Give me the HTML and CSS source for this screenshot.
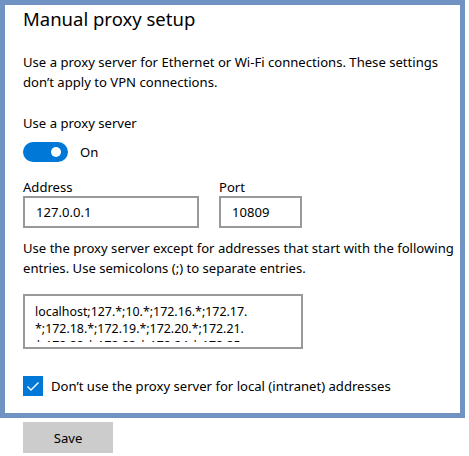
FILE: index.html
```html
<!DOCTYPE html>
<html>
<head>
<meta charset="utf-8">
<link rel="stylesheet" href="styles.css">
</head>
<body>
<div class="frame">
  <h1 class="title">Manual proxy setup</h1>
  <p class="desc">Use a proxy server for Ethernet or Wi-Fi connections. These settings<br>don’t apply to VPN connections.</p>
  <div class="label use-label">Use a proxy server</div>
  <div class="toggle-row">
    <div class="toggle"><span class="knob"></span></div>
    <span class="toggle-text">On</span>
  </div>
  <div class="fields">
    <div class="field">
      <div class="field-label">Address</div>
      <div class="input addr">127.0.0.1</div>
    </div>
    <div class="field">
      <div class="field-label">Port</div>
      <div class="input port">10809</div>
    </div>
  </div>
  <p class="desc desc2">Use the proxy server except for addresses that start with the following<br>entries. Use semicolons (;) to separate entries.</p>
  <div class="textarea">
    <div class="ta-inner">
      <span class="ta-line">localhost;127.*;10.*;172.16.*;172.17.</span>
      <span class="ta-line">*;172.18.*;172.19.*;172.20.*;172.21.</span>
      <span class="ta-line">*;172.22.*;172.23.*;172.24.*;172.25.</span>
    </div>
  </div>
  <div class="check-row">
    <div class="checkbox">
      <svg width="20" height="20" viewBox="0 0 20 20"><polyline points="4.5,10.5 8,14 15.5,6.5" fill="none" stroke="#fff" stroke-width="1.4"/></svg>
    </div>
    <span class="check-text">Don’t use the proxy server for local (intranet) addresses</span>
  </div>
</div>
<button class="save">Save</button>
</body>
</html>
```
FILE: styles.css
```css
* { box-sizing: border-box; }
html, body { margin: 0; padding: 0; background: #fff; }
body {
  font-family: "Noto Sans", "Open Sans", sans-serif;
  color: #000;
  width: 469px;
  height: 456px;
  overflow: hidden;
}
.frame {
  width: 465px;
  height: 418px;
  border: 5px solid #7193c3;
  padding: 0 0 0 18px;
  display: flex;
  flex-direction: column;
  font-size: 13.1px;
}
.title {
  margin: 0;
  font-size: 18.5px;
  font-weight: 400;
  line-height: 28px;
  white-space: nowrap;
}
.desc {
  margin: 19px 0 0 0;
  line-height: 20px;
  white-space: nowrap;
}
.use-label {
  margin-top: 21px;
  line-height: 20px;
}
.toggle-row {
  margin-top: 9px;
  display: flex;
  align-items: center;
  gap: 12px;
}
.toggle {
  width: 45px;
  height: 20px;
  border-radius: 10px;
  background: #0078d7;
  display: flex;
  align-items: center;
  justify-content: flex-end;
  padding-right: 7px;
}
.knob {
  width: 10px;
  height: 10px;
  border-radius: 50%;
  background: #fff;
}
.toggle-text { line-height: 20px; }
.fields {
  margin-top: 16px;
  display: flex;
  gap: 20px;
}
.field-label {
  line-height: 18px;
}
.input {
  height: 32px;
  border: 2px solid #999;
  padding: 0 0 0 11px;
  display: flex;
  align-items: center;
}
.addr { width: 176px; }
.port { width: 83px; }
.desc2 { margin-top: 10px; }
.textarea {
  margin-top: 16px;
  width: 280px;
  height: 55px;
  border: 2px solid #999;
  padding: 7px 0 5px 10px;
}
.ta-inner {
  height: 100%;
  overflow: hidden;
  display: flex;
  flex-direction: column;
}
.ta-line {
  display: block;
  white-space: nowrap;
  line-height: 17px;
  font-size: 12.4px;
}
.check-row {
  margin-top: 27px;
  display: flex;
  align-items: center;
  gap: 8px;
}
.checkbox {
  width: 20px;
  height: 20px;
  background: #0078d7;
  display: flex;
  flex-shrink: 0;
}
.check-text { line-height: 20px; white-space: nowrap; }
.save {
  display: block;
  margin: 4px 0 0 23px;
  width: 90px;
  height: 31px;
  border: none;
  background: #ccc;
  font-family: "Noto Sans", "Open Sans", sans-serif;
  font-size: 13.1px;
  color: #000;
  padding: 0;
}
```
